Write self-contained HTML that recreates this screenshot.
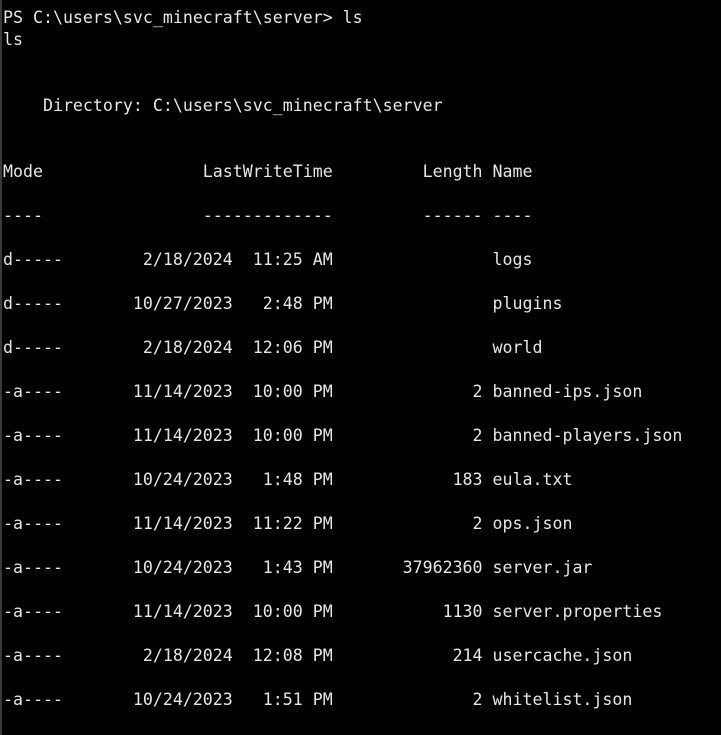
<!DOCTYPE html>
<html><head><style>
html,body{margin:0;padding:0;background:#000;}
body{width:721px;height:735px;overflow:hidden;position:relative;border-left:2px solid #3a3a3a;box-sizing:border-box;}
pre{margin:0;position:absolute;left:1px;top:7px;font-family:"DejaVu Sans Mono","Liberation Mono",monospace;font-size:16.6px;line-height:22px;color:#e6e6e6;white-space:pre;}
</style></head><body><pre>PS C:\users\svc_minecraft\server&gt; ls
ls


    Directory: C:\users\svc_minecraft\server


Mode                LastWriteTime         Length Name

----                -------------         ------ ----

d-----        2/18/2024  11:25 AM                logs

d-----       10/27/2023   2:48 PM                plugins

d-----        2/18/2024  12:06 PM                world

-a----       11/14/2023  10:00 PM              2 banned-ips.json

-a----       11/14/2023  10:00 PM              2 banned-players.json

-a----       10/24/2023   1:48 PM            183 eula.txt

-a----       11/14/2023  11:22 PM              2 ops.json

-a----       10/24/2023   1:43 PM       37962360 server.jar

-a----       11/14/2023  10:00 PM           1130 server.properties

-a----        2/18/2024  12:08 PM            214 usercache.json

-a----       10/24/2023   1:51 PM              2 whitelist.json
</pre></body></html>
